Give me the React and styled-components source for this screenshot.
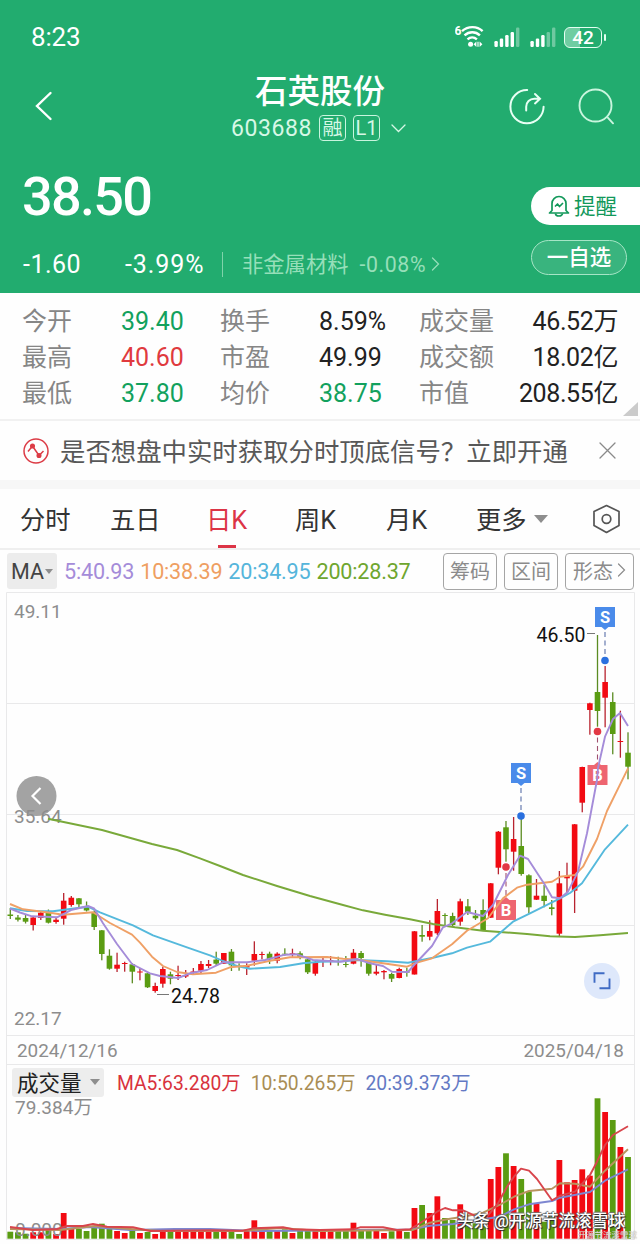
import React from "react";
import styled, { createGlobalStyle } from "styled-components";

const RED = "#f20a12";
const GREEN = "#5a9c12";

// [color, bodyTop, bodyBottom, wickTop, wickBottom, volumeTop]
const DAYS = [
  ["g", 914.5, 916, 908, 919, 1231.7],
  ["g", 917.5, 919.7, 915, 921.5, 1232.3],
  ["g", 918, 921.7, 914.5, 923.5, 1233.7],
  ["r", 917.5, 925, 917, 930.5, 1232.3],
  ["r", 912.7, 918, 911.5, 920, 1232.3],
  ["g", 912.7, 922.7, 909.5, 923.5, 1230],
  ["r", 919.7, 922, 918, 923.7, 1234],
  ["r", 900.7, 918.7, 893, 924.7, 1213],
  ["r", 897.7, 905, 896, 906.7, 1229],
  ["g", 898.3, 904.3, 898, 908, 1229],
  ["g", 906.5, 910.5, 901.5, 911.5, 1231],
  ["g", 912, 927, 910.5, 930, 1227.3],
  ["g", 930.3, 954, 930, 960.3, 1223.7],
  ["g", 955.7, 968.7, 949.3, 969.7, 1229],
  ["r", 964.7, 968.7, 952.7, 972, 1231],
  ["r", 963, 964, 961.7, 971.7, 1233],
  ["g", 964.3, 971.7, 963.3, 983.3, 1230.3],
  ["r", 971.5, 972.5, 968.3, 980.3, 1233],
  ["g", 973.3, 987.3, 972.3, 988, 1232],
  ["r", 986, 991, 982.7, 992.7, 1234],
  ["r", 969, 983.7, 966.7, 987.7, 1231],
  ["g", 974.3, 978.7, 971.7, 984.3, 1232],
  ["r", 975, 976, 965.7, 980, 1231],
  ["r", 975, 976.5, 970, 978, 1231],
  ["r", 971.5, 973, 968, 974.5, 1231.7],
  ["r", 964, 970.7, 961, 973.3, 1231.3],
  ["r", 964, 966, 960, 968, 1231.3],
  ["g", 959.6, 963.7, 951.7, 965, 1232],
  ["r", 953, 963.7, 953, 964, 1231.7],
  ["g", 951.7, 965.3, 949, 971, 1231],
  ["g", 965.7, 967, 963.3, 970.7, 1234],
  ["r", 965, 967.5, 963.3, 975, 1231],
  ["r", 954, 960.7, 941.3, 965.7, 1220.3],
  ["r", 954, 955, 951.7, 959.3, 1229],
  ["g", 953.7, 959.3, 951.7, 964, 1230.3],
  ["r", 953.7, 960.7, 952.3, 963.3, 1231],
  ["g", 953.7, 954.5, 948.3, 955.7, 1229.3],
  ["r", 953.3, 954.3, 948.7, 956.7, 1233],
  ["g", 953.3, 958, 951.3, 959.3, 1230.3],
  ["g", 959.3, 972.3, 958, 974, 1230.3],
  ["r", 963, 973.7, 960.7, 975.7, 1230],
  ["r", 960.7, 961.5, 956.7, 967, 1230.7],
  ["r", 960, 961, 956, 965.3, 1230],
  ["g", 961, 962, 956.7, 965.7, 1230.3],
  ["g", 964, 965, 956, 967.3, 1230.3],
  ["r", 952.7, 963.7, 949, 964.3, 1222.7],
  ["g", 953, 958, 951, 966.7, 1229],
  ["g", 962.3, 973.7, 960.7, 975.7, 1229],
  ["r", 971.7, 973.7, 965, 975.3, 1231],
  ["r", 971, 972.3, 970, 979.3, 1233],
  ["g", 974, 978.7, 972.7, 982, 1231.3],
  ["r", 969, 978, 967.7, 978.3, 1230.3],
  ["g", 971.3, 972.7, 967.7, 976.7, 1232],
  ["r", 931.3, 974.5, 931, 974.5, 1208],
  ["g", 935, 936.7, 925, 941.7, 1205],
  ["r", 931, 936.7, 920.3, 940.3, 1213],
  ["r", 911, 933.3, 899, 935, 1196.3],
  ["g", 915, 916, 913.3, 925, 1218],
  ["g", 916, 925, 912.7, 926.7, 1220],
  ["r", 901.3, 921.7, 898.7, 925.7, 1204.3],
  ["g", 906.3, 912, 899, 915, 1221.7],
  ["g", 915.7, 918.3, 910, 920, 1223.3],
  ["g", 910, 930, 899.3, 930.7, 1221.7],
  ["r", 883.3, 917.7, 883, 918, 1179],
  ["r", 831.7, 867.7, 831, 874.3, 1167],
  ["g", 827.3, 849.3, 821, 861.7, 1153.3],
  ["r", 839, 851.7, 817, 870.7, 1166],
  ["g", 846, 874, 818.3, 875.7, 1179],
  ["g", 875.3, 907.3, 874.3, 913.3, 1191.3],
  ["r", 895.7, 899.7, 879, 900, 1203.3],
  ["g", 895.7, 901, 885, 907.3, 1221.7],
  ["g", 907.3, 909, 900, 915.3, 1216.7],
  ["r", 883.3, 933.7, 871, 936.7, 1160],
  ["r", 876, 878.3, 862.7, 893.3, 1182.3],
  ["r", 824.3, 890.7, 824, 913, 1180],
  ["r", 767, 802.7, 766.7, 812.3, 1169.3],
  ["r", 703.3, 710, 702.7, 734.7, 1175.7],
  ["g", 692, 711, 635, 726.7, 1098.3],
  ["r", 682, 697.7, 666, 727.3, 1112],
  ["g", 702, 734, 692.3, 754.3, 1120],
  ["r", 741, 742, 710.7, 757.7, 1147],
  ["g", 752.7, 766.7, 732.3, 779.3, 1157]
];

const MA_LINES = [
  {
    color: "#79a93a",
    points: [48, 818.7, 102, 830, 152, 844, 177, 850, 200, 858.3, 220, 866, 243, 875, 277, 886, 310, 896, 343, 905, 363, 910.3, 385, 914.7, 410, 919.3, 433, 924, 455, 927.3, 483, 930.7, 527, 934, 550, 936.3, 575, 937, 600, 935.3, 628, 933]
  },
  {
    color: "#55b9dc",
    points: [10, 908.3, 27, 911, 53, 911.3, 70, 909, 88, 906.7, 100, 912.3, 133, 925.3, 153, 935.3, 187, 947.3, 210, 955.3, 223, 961, 237, 966, 250, 968.7, 280, 967, 303, 963.3, 320, 961.7, 343, 961.3, 357, 960, 387, 961.3, 408, 962.7, 433, 957.7, 452, 953.3, 467, 947.7, 490, 941.7, 500, 933, 513, 921.7, 530, 913.3, 560, 898.3, 570, 893, 582, 883.3, 605, 849.3, 628, 824.7]
  },
  {
    color: "#efa066",
    points: [10, 904, 23, 909.3, 50, 912.7, 63, 914.7, 93, 912.3, 110, 923, 132, 934.7, 140, 942.7, 152, 956.7, 163, 966, 177, 972, 193, 974.3, 216, 972.7, 230, 967.3, 247, 965.7, 270, 960.7, 290, 957.3, 327, 957, 343, 958.7, 360, 960, 383, 963.3, 407, 966.7, 417, 962.7, 432, 958.3, 452, 944.3, 467, 930.7, 488, 918.3, 503, 898.3, 517, 887.7, 527, 884.7, 552, 881.7, 560, 876.7, 575, 875, 583, 866.7, 597, 839, 607, 811, 628, 768.3]
  },
  {
    color: "#a58cd9",
    points: [10, 908.7, 20, 912.5, 32, 916.3, 57, 917.3, 72, 909.7, 88, 906, 94, 908.3, 103, 923.3, 117, 944, 132, 964, 150, 973.3, 160, 976, 178, 978, 190, 973.3, 207, 970, 223, 962.3, 247, 962.3, 265, 960, 285, 954.7, 297, 954.3, 313, 960, 340, 961.7, 357, 959, 370, 963.3, 383, 966, 392, 971.7, 408, 972, 415, 964, 432, 946, 443, 927.3, 452, 923.3, 467, 912, 483, 916, 493, 905, 508, 875, 520, 855.7, 528, 859, 545, 885, 552, 897.3, 560, 898.3, 568, 891.7, 578, 871.7, 587, 833.3, 597, 780, 598, 768, 605, 736.7, 613, 719, 620, 713, 628, 726]
  }
];

const VOL_LINES = [
  {
    color: "#7d86d0",
    points: [10, 1228, 60, 1229, 90, 1227, 130, 1230, 175, 1229, 210, 1229, 260, 1231, 320, 1230.5, 410, 1229.5, 430, 1225.7, 453, 1224, 477, 1220, 500, 1216.7, 514, 1209.3, 529, 1204.3, 552, 1201, 560, 1197.7, 590, 1192, 605, 1180.7, 628, 1169.3]
  },
  {
    color: "#b9935f",
    points: [10, 1229, 60, 1230, 95, 1226, 130, 1229, 160, 1231, 240, 1231, 280, 1228, 320, 1231, 413, 1230, 430, 1222.7, 447, 1219.3, 463, 1216.7, 483, 1212.7, 500, 1204.7, 514, 1196.7, 529, 1191, 552, 1188.7, 560, 1183.3, 575, 1183.7, 590, 1186.7, 605, 1170.7, 628, 1149.3]
  },
  {
    color: "#d8454c",
    points: [10, 1227, 33, 1230, 57, 1229, 67, 1226, 83, 1226, 93, 1224, 107, 1226.7, 133, 1227.3, 150, 1231, 213, 1230.3, 243, 1230.7, 253, 1228.3, 283, 1227.3, 293, 1229.3, 320, 1230, 353, 1229.3, 360, 1227.3, 383, 1227.3, 397, 1230, 410, 1229.3, 420, 1223.3, 437, 1211.7, 445, 1208, 453, 1210.3, 463, 1210.3, 477, 1216.7, 487, 1216.7, 498, 1203.3, 507, 1186.7, 514, 1176.7, 521, 1168.7, 529, 1170.7, 537, 1179, 552, 1200.3, 560, 1195.7, 575, 1191.7, 590, 1175, 597, 1161.7, 605, 1145, 613, 1135, 628, 1126.3]
  }
];

const STATS = [
  ["今开", "39.40", "#12a15d", "换手", "8.59%", "#222", "成交量", "46.52万"],
  ["最高", "40.60", "#e03a3e", "市盈", "49.99", "#222", "成交额", "18.02亿"],
  ["最低", "37.80", "#12a15d", "均价", "38.75", "#12a15d", "市值", "208.55亿"]
];

const TABS = [
  { label: "分时", width: 90 },
  { label: "五日", width: 96 },
  { label: "日K", width: 89, active: true },
  { label: "周K", width: 91 },
  { label: "月K", width: 90 },
  { label: "更多", width: 116, more: true }
];

const dayX = i => 10.3 + i * 7.626;

const Signal = ({ level }) => (
  <svg width="26" height="20" viewBox="0 0 26 20">
    {[6, 8.5, 12, 15, 19.5].map((h, i) => (
      <rect
        key={h}
        x={0.4 + i * 5.4}
        y={20 - h}
        width="3.4"
        height={h}
        rx="1.2"
        fill="#fff"
        opacity={i < level ? 1 : 0.35}
      />
    ))}
  </svg>
);

const Wifi = () => (
  <svg width="29" height="24" viewBox="0 0 29 24" fill="none" stroke="#fff">
    <text x="-0.5" y="9.5" fontSize="12" fontWeight="700" fill="#fff" stroke="none">
      6
    </text>
    <path d="M7 6.2C13 .8 22 .8 27.6 6.2" strokeWidth="2.4" />
    <path d="M9.5 10.4c4.6-4.2 11-4.2 15.4 0" strokeWidth="2.4" />
    <path d="M12.5 14.4c2.8-2.5 6.600-2.500 9.400 0" strokeWidth="2.4" />
    <circle cx="15.6" cy="19.3" r="2.5" fill="#fff" stroke="none" />
    <path d="m18.6 19.3 2.8-2.8v5.6zM27.4 19.3l-2.8-2.8v5.6z" fill="#fff" stroke="none" />
    <path d="M23 16.8v5" strokeWidth="1.2" />
  </svg>
);

const Chevron = ({ w, h, d, stroke = 1.6 }) => (
  <svg width={w} height={h} viewBox={`0 0 ${w} ${h}`} fill="none">
    <path d={d} stroke="currentColor" strokeWidth={stroke} strokeLinecap="round" />
  </svg>
);

const Line = ({ color, points }) => (
  <polyline
    points={points.join(" ")}
    fill="none"
    stroke={color}
    strokeWidth="1.9"
    strokeLinejoin="round"
  />
);

const Marker = ({ x, y, dotY, type }) => {
  const sell = type === "S";
  const color = sell ? "#4a8bea" : "#ee6570";
  return (
    <g>
      <line
        x1={x}
        x2={x}
        y1={sell ? y + 15 : dotY + 6}
        y2={sell ? dotY - 4 : y - 12}
        stroke={sell ? "#5a6fa8" : "#a0506e"}
        strokeWidth="1.1"
        strokeDasharray="5 3.5"
      />
      <rect x={x - 10} y={y - 10} width="20" height="20" fill={color} />
      <path
        d={
          sell
            ? `M${x - 3.5} ${y + 10}h7l-3.5 3z`
            : `M${x - 3.5} ${y - 10}h7l-3.5 -3z`
        }
        fill={color}
      />
      <circle cx={x} cy={dotY} r="3.8" fill={sell ? "#2a70df" : "#e23844"} />
      <text
        x={x}
        y={y + 5.8}
        fontSize="16.5"
        fontWeight="700"
        textAnchor="middle"
        fill="#fff"
      >
        {type}
      </text>
    </g>
  );
};

const KChart = () => (
  <Chart height="444" viewBox="0 592 640 444">
    <path
      d="M6.5 1036V592.5H634.5V1036M7 703.5H634M7 814.5H634M7 925.5H634M7 1035.5H634"
      fill="none"
      stroke="#e9e9ea"
    />
    <Axis x="14" y="618">49.11</Axis>
    <Axis x="14" y="1024.5">22.17</Axis>
    <circle cx="36.5" cy="796" r="20" fill="#a3a3a3" />
    <path d="m40.5 788-8 8 8 8" fill="none" stroke="#fff" strokeWidth="2.2" />
    <Axis x="14" y="823">35.64</Axis>
    {DAYS.map(([c, top, bottom, high, low], i) => (
      <g key={i} fill={c === "r" ? RED : GREEN}>
        <rect
          x={dayX(i) - 0.65}
          y={high}
          width="1.3"
          height={low - high}
          fill={c === "r" ? "#b8232f" : "#5b8c22"}
        />
        <rect x={dayX(i) - 2.8} y={top} width="5.6" height={bottom - top} />
      </g>
    ))}
    <Marker type="S" x={521} y={773} dotY={816} />
    <Marker type="B" x={506} y={910} dotY={867} />
    <Marker type="S" x={605} y={617} dotY={660.5} />
    <Marker type="B" x={597.5} y={775} dotY={731.5} />
    {MA_LINES.map(line => (
      <Line key={line.color} {...line} />
    ))}
    <path d="M157 994.5h12M587 633.5h8" stroke="#777" />
    <PriceTag x="171" y="1003">24.78</PriceTag>
    <PriceTag x="536.5" y="641.5">46.50</PriceTag>
    <circle cx="602" cy="981" r="18" fill="#dee8fb" />
    <path
      d="M604.5 973.3h-10v9.5M599.5 988.2h10v-9.8"
      fill="none"
      stroke="#3f6bc4"
      strokeWidth="1.9"
    />
  </Chart>
);

const VolumeChart = () => (
  <Chart height="146" viewBox="0 1098 640 146">
    <path d="M6.5 1098V1239.5H634.5V1098" fill="none" stroke="#e9e9ea" />
    {DAYS.map(([c, , , , , top], i) => (
      <rect
        key={i}
        x={dayX(i) - 2.9}
        y={top}
        width="5.8"
        height={1238.7 - top}
        fill={c === "r" ? RED : GREEN}
      />
    ))}
    <Axis x="15" y="1235.5">0.000</Axis>
    {VOL_LINES.map(line => (
      <Line key={line.color} {...line} />
    ))}
  </Chart>
);

const App = () => (
  <Page>
    <GlobalStyle />
    <Header>
      <StatusBar>
        <Clock>8:23</Clock>
        <StatusIcons>
          <Wifi />
          <Signal level={4} />
          <Signal level={3} />
          <Battery>42</Battery>
        </StatusIcons>
      </StatusBar>

      <TitleBar>
        <Chevron w={18} h={30} d="M15.5 2 2 15l13.5 13" stroke={2.4} />
        <TitleBlock>
          <StockName>石英股份</StockName>
          <StockCode>
            603688
            <Tag>融</Tag>
            <Tag>L1</Tag>
            <Chevron w={15} h={9} d="M1 1l6.5 6.5L14 1" stroke={1.3} />
          </StockCode>
        </TitleBlock>
        <Actions>
          <svg width="36" height="37" viewBox="0 0 36 37" fill="none" stroke="#e8fff4" strokeWidth="2" strokeLinecap="round">
            <path d="M18.2 2A16.6 16.6 0 1 0 34.6 18.8" />
            <path d="M17.2 22.5v-3.8a8 8 0 0 1 8-8h5.3M26 6l5 4.7-5 4.7" />
          </svg>
          <svg width="36" height="37" viewBox="0 0 36 37" fill="none" stroke="#c9f5de" strokeWidth="1.9" strokeLinecap="round">
            <circle cx="17.5" cy="17.5" r="16" />
            <path d="m30 29.8 5 5.5" />
          </svg>
        </Actions>
      </TitleBar>

      <Quote>
        <QuoteMain>
          <Price>38.50</Price>
          <Change>
            <Delta>-1.60</Delta>
            <Percent>-3.99%</Percent>
            <Industry>
              <IndustryName>非金属材料</IndustryName>
              <IndustryRate>-0.08%</IndustryRate>
              <Chevron w={9} h={14} d="M1.5 1 7.5 7l-6 6" stroke={1.3} />
            </Industry>
          </Change>
        </QuoteMain>
        <QuoteSide>
          <AlertButton>
            <svg width="22" height="22" viewBox="0 0 22 22" fill="none" stroke="#12985a" strokeWidth="1.7" strokeLinejoin="round">
              <path d="M4 15.5V8.5a7 7 0 0 1 14 0v7l2.5 2.5h-19z" />
              <path d="M7.5 18.5a3.5 2.5 0 0 0 7 0M7 11.5l2.5-2.5 2 2.5L15 8" />
            </svg>
            <AlertLabel>提醒</AlertLabel>
          </AlertButton>
          <WatchButton>一自选</WatchButton>
        </QuoteSide>
      </Quote>
    </Header>

    <Stats>
      {STATS.map(([a, av, ac, b, bv, bc, c, cv]) => (
        <StatRow key={a}>
          <Label>{a}</Label>
          <Value $color={ac}>{av}</Value>
          <Label>{b}</Label>
          <Value $color={bc}>{bv}</Value>
          <Label>{c}</Label>
          <Value $color="#222" $right>
            {cv}
          </Value>
        </StatRow>
      ))}
      <Corner />
    </Stats>

    <Notice>
      <svg width="26" height="26" viewBox="0 0 26 26" fill="none" stroke="#dc3c46" strokeWidth="1.5">
        <circle cx="13" cy="13" r="12" />
        <path d="m5 13.5 4.5-5.5 6.5 9.5 4.5-4.5" />
        <circle cx="9.5" cy="8" r="1.8" fill="#dc3c46" />
        <circle cx="16" cy="17.5" r="1.8" fill="#dc3c46" />
      </svg>
      <NoticeText>是否想盘中实时获取分时顶底信号？立即开通</NoticeText>
      <Chevron w={17} h={17} d="M1 1l15 15M16 1 1 16" stroke={1.3} />
    </Notice>

    <Tabs>
      {TABS.map(tab => (
        <Tab key={tab.label} $width={tab.width}>
          <TabLabel $active={tab.active}>{tab.label}</TabLabel>
          {tab.more && <Caret $size={7} />}
        </Tab>
      ))}
      <svg width="29" height="30" viewBox="0 0 29 30" fill="none" stroke="#555" strokeWidth="1.7" strokeLinejoin="round">
        <path d="M14.5 1.5 27 7.5v14l-12.5 7L2 21.5v-14z" />
        <circle cx="14.5" cy="15" r="4.3" />
      </svg>
    </Tabs>

    <MaBar>
      <MaSelect>
        MA
        <Caret $size={4.5} />
      </MaSelect>
      <MaValues>
        <MaValue $color="#a58cd9">5:40.93</MaValue>
        <MaValue $color="#ef9f62">10:38.39</MaValue>
        <MaValue $color="#55b5db">20:34.95</MaValue>
        <MaValue $color="#6fa62f">200:28.37</MaValue>
      </MaValues>
      <Outline $width={54}>筹码</Outline>
      <Outline $width={54}>区间</Outline>
      <Outline $width={69}>
        形态
        <Chevron w={9} h={14} d="M1.5 1l6 6-6 6" stroke={1.2} />
      </Outline>
    </MaBar>

    <KChart />
    <Dates>
      <span>2024/12/16</span>
      <span>2025/04/18</span>
    </Dates>
    <VolumeBar>
      <VolumeSelect>
        成交量
        <Caret $size={5} />
      </VolumeSelect>
      <VolumeValue $color="#d8323c">MA5:63.280万</VolumeValue>
      <VolumeValue $color="#a98d54">10:50.265万</VolumeValue>
      <VolumeValue $color="#6379c4">20:39.373万</VolumeValue>
    </VolumeBar>
    <VolumePane>
      <VolumeChart />
      <VolumeMax>79.384万</VolumeMax>
    </VolumePane>
    <Credit>头条 @开源节流滚雪球</Credit>
    <SmallCredit>开源节流滚雪球</SmallCredit>
  </Page>
);

const GlobalStyle = createGlobalStyle`
  * {
    box-sizing: border-box;
  }
  body {
    margin: 0;
    background: #fff;
    font-family: Roboto, "Noto Sans CJK SC", sans-serif;
  }
  svg {
    display: block;
    flex-shrink: 0;
  }
`;

const Page = styled.div`
  position: relative;
  width: 640px;
  height: 1244px;
  overflow: hidden;
  background: #fefefe;
  white-space: nowrap;
`;

const Header = styled.header`
  height: 293px;
  background: #22ac6f;
  color: #fff;
`;

const StatusBar = styled.div`
  display: flex;
  align-items: center;
  justify-content: space-between;
  height: 74px;
  padding: 0 38px 0 31px;
`;

const Clock = styled.span`
  font-size: 26px;
  letter-spacing: -0.2px;
`;

const StatusIcons = styled.div`
  display: flex;
  align-items: center;
  gap: 10px;
`;

const Battery = styled.span`
  position: relative;
  width: 38px;
  height: 21px;
  margin-left: -2px;
  border: 1.5px solid #e4fff2;
  border-radius: 6px;
  background: linear-gradient(90deg, #6fcda2 42%, transparent 42%);
  font-size: 19px;
  font-weight: 500;
  line-height: 19px;
  text-align: center;

  &::after {
    content: "";
    position: absolute;
    right: -5px;
    top: 6px;
    width: 2px;
    height: 7px;
    border-radius: 1px;
    background: #e4fff2;
  }
`;

const TitleBar = styled.div`
  display: grid;
  grid-template-columns: 1fr auto 1fr;
  grid-template-rows: 64px;
  align-items: center;
  height: 64px;
  margin-bottom: 8px;
  padding: 0 26px 0 35px;
`;

const TitleBlock = styled.div`
  display: flex;
  flex-direction: column;
  align-items: center;
  margin-right: 12px;
  padding-top: 6px;
`;

const StockName = styled.h1`
  margin: 0 0 0 3px;
  font-size: 32.5px;
  font-weight: 500;
  line-height: 38px;
`;

const StockCode = styled.div`
  display: flex;
  align-items: center;
  gap: 7px;
  height: 34px;
  color: #d6f8e6;
  font-size: 23px;
  letter-spacing: 0.6px;

  svg {
    margin-left: 4px;
  }
`;

const Tag = styled.span`
  width: 27px;
  height: 26px;
  border: 1.5px solid #c9f5de;
  border-radius: 4px;
  font-size: 20px;
  line-height: 24px;
  letter-spacing: 0;
  text-align: center;
`;

const Actions = styled.div`
  display: flex;
  justify-content: flex-end;
  gap: 33px;
`;

const Quote = styled.div`
  display: flex;
  justify-content: space-between;
  height: 147px;
`;

const QuoteMain = styled.div`
  padding: 21px 0 0 22px;
`;

const Price = styled.div`
  font-size: 54px;
  font-weight: 500;
  line-height: 60px;
  letter-spacing: -1.7px;
`;

const Change = styled.div`
  display: flex;
  align-items: center;
  height: 40px;
  margin-top: 17px;
  font-size: 25px;
`;

const Delta = styled.span`
  width: 102px;
  padding-left: 1px;
  letter-spacing: 0.5px;
`;

const Percent = styled.span`
  width: 99px;
  padding-left: 1px;
  border-right: 1px solid #7fd3aa;
  line-height: 25px;
  letter-spacing: 0.9px;
`;

const Industry = styled.div`
  display: flex;
  align-items: center;
  height: 36px;
  padding-left: 19px;
  color: #96dfb9;
  font-size: 21.3px;
`;

const IndustryName = styled.span`
  margin-right: 11px;
  padding-bottom: 4px;
`;

const IndustryRate = styled.span`
  margin-right: 5px;
  letter-spacing: 0.6px;
`;

const QuoteSide = styled.div`
  padding-top: 41px;
`;

const AlertButton = styled.div`
  display: flex;
  align-items: center;
  gap: 4px;
  width: 109px;
  height: 38px;
  padding-left: 17px;
  border-radius: 19px 0 0 19px;
  background: #fff;
  color: #12985a;
  font-size: 21.5px;
`;

const AlertLabel = styled.span`
  padding-bottom: 3px;
`;

const WatchButton = styled.div`
  width: 96px;
  height: 35px;
  margin-top: 15px;
  border: 1px solid #a6e5c6;
  border-radius: 18px;
  background: #39b47e;
  font-size: 21.5px;
  font-weight: 500;
  line-height: 34px;
  text-align: center;
`;

const Stats = styled.section`
  position: relative;
  height: 128px;
  padding: 11px 22px 0;
  border-bottom: 2px solid #f1f1f1;
`;

const StatRow = styled.div`
  display: grid;
  grid-template-columns: 99px 99px 99px 100px 90px 1fr;
  height: 36px;
  line-height: 36px;
  font-size: 25px;
`;

const Label = styled.span`
  color: #868686;
`;

const Value = styled.span`
  color: ${p => p.$color};
  text-align: ${p => (p.$right ? "right" : "left")};
  letter-spacing: ${p => (p.$right ? "-0.4px" : "0")};
`;

const Corner = styled.i`
  position: absolute;
  right: 2px;
  bottom: 3px;
  border-bottom: 14px solid #cbcbcb;
  border-left: 15px solid transparent;
`;

const Notice = styled.div`
  display: flex;
  align-items: center;
  height: 68px;
  padding: 0 24px 0 23px;
  border-bottom: 9px solid #f7f7f7;
  color: #8a8a8a;
`;

const NoticeText = styled.div`
  flex: 1;
  padding: 0 0 2px 11px;
  color: #585858;
  font-size: 25.4px;
`;

const Tabs = styled.nav`
  display: flex;
  align-items: center;
  height: 61px;
  padding-left: 20px;
  border-bottom: 2px solid #efefef;
`;

const Tab = styled.div`
  display: flex;
  align-items: center;
  gap: 7px;
  width: ${p => p.$width}px;
  height: 60px;
`;

const TabLabel = styled.span`
  position: relative;
  padding-bottom: 2px;
  color: ${p => (p.$active ? "#dc3446" : "#333")};
  font-size: 25.3px;

  &::after {
    content: "";
    display: ${p => (p.$active ? "block" : "none")};
    position: absolute;
    left: calc(50% - 9px);
    bottom: -10px;
    width: 18px;
    height: 3px;
    background: #dc3446;
  }
`;

const Caret = styled.i`
  border: ${p => p.$size}px solid transparent;
  border-top: ${p => p.$size + 1}px solid #8e8e8e;
  border-bottom: 0;
`;

const MaBar = styled.div`
  display: flex;
  align-items: center;
  gap: 7px;
  height: 42px;
  padding: 0 6px 0 7px;
`;

const MaSelect = styled.div`
  display: flex;
  align-items: center;
  gap: 1px;
  width: 50px;
  height: 36px;
  padding-left: 4px;
  border-radius: 3px;
  background: #ececec;
  color: #444;
  font-size: 21.5px;
`;

const MaValues = styled.div`
  display: flex;
  flex: 1;
  gap: 6px;
`;

const MaValue = styled.span`
  color: ${p => p.$color};
  font-size: 21.6px;
  letter-spacing: -0.2px;
`;

const Outline = styled.div`
  display: flex;
  align-items: center;
  justify-content: center;
  gap: 4px;
  width: ${p => p.$width}px;
  height: 37px;
  padding-bottom: 2px;
  border: 1px solid #a5a5a5;
  border-radius: 4px;
  color: #8b8b8b;
  font-size: 20px;
`;

const Chart = styled.svg.attrs({ width: 640 })`
  font-family: Roboto, "Noto Sans CJK SC", sans-serif;
`;

const Axis = styled.text`
  fill: #8d8d8d;
  font-size: 19px;
`;

const PriceTag = styled.text`
  fill: #111;
  font-size: 19.5px;
`;

const Dates = styled.div`
  display: flex;
  align-items: center;
  justify-content: space-between;
  height: 29px;
  margin: 0 5px 0 6px;
  padding: 0 10px;
  border: 1px solid #e9e9ea;
  border-top: 0;
  color: #8d8d8d;
  font-size: 18.9px;
`;

const VolumeBar = styled.div`
  display: flex;
  align-items: center;
  gap: 10px;
  height: 33px;
  margin: 0 5px 0 6px;
  padding: 2px 0 0 5px;
  border: 1px solid #e9e9ea;
  border-width: 0 1px;
`;

const VolumeSelect = styled.div`
  display: flex;
  align-items: center;
  gap: 8px;
  width: 92px;
  height: 29px;
  margin-right: 3px;
  padding: 0 0 2px 5px;
  border-radius: 3px;
  background: #ededed;
  color: #222;
  font-size: 21.5px;
`;

const VolumeValue = styled.span`
  padding-bottom: 1px;
  color: ${p => p.$color};
  font-size: 19.3px;
`;

const VolumePane = styled.div`
  position: relative;
`;

const VolumeMax = styled.span`
  position: absolute;
  left: 15px;
  top: -3px;
  color: #8d8d8d;
  font-size: 19px;
  line-height: 26px;
`;

const Credit = styled.div`
  position: absolute;
  right: 15px;
  bottom: 10px;
  color: #fff;
  font-size: 16.6px;
  font-weight: 500;
  line-height: 24px;
  text-shadow: 1px 1px 1px #222, -1px 0 1px #555, 0 -1px 1px #777;
`;

const SmallCredit = styled.div`
  position: absolute;
  right: 3px;
  bottom: 3px;
  color: rgba(255, 255, 255, 0.8);
  font-size: 8.5px;
  line-height: 12px;
  text-shadow: 0 0 1px #777;
`;

export default App;
